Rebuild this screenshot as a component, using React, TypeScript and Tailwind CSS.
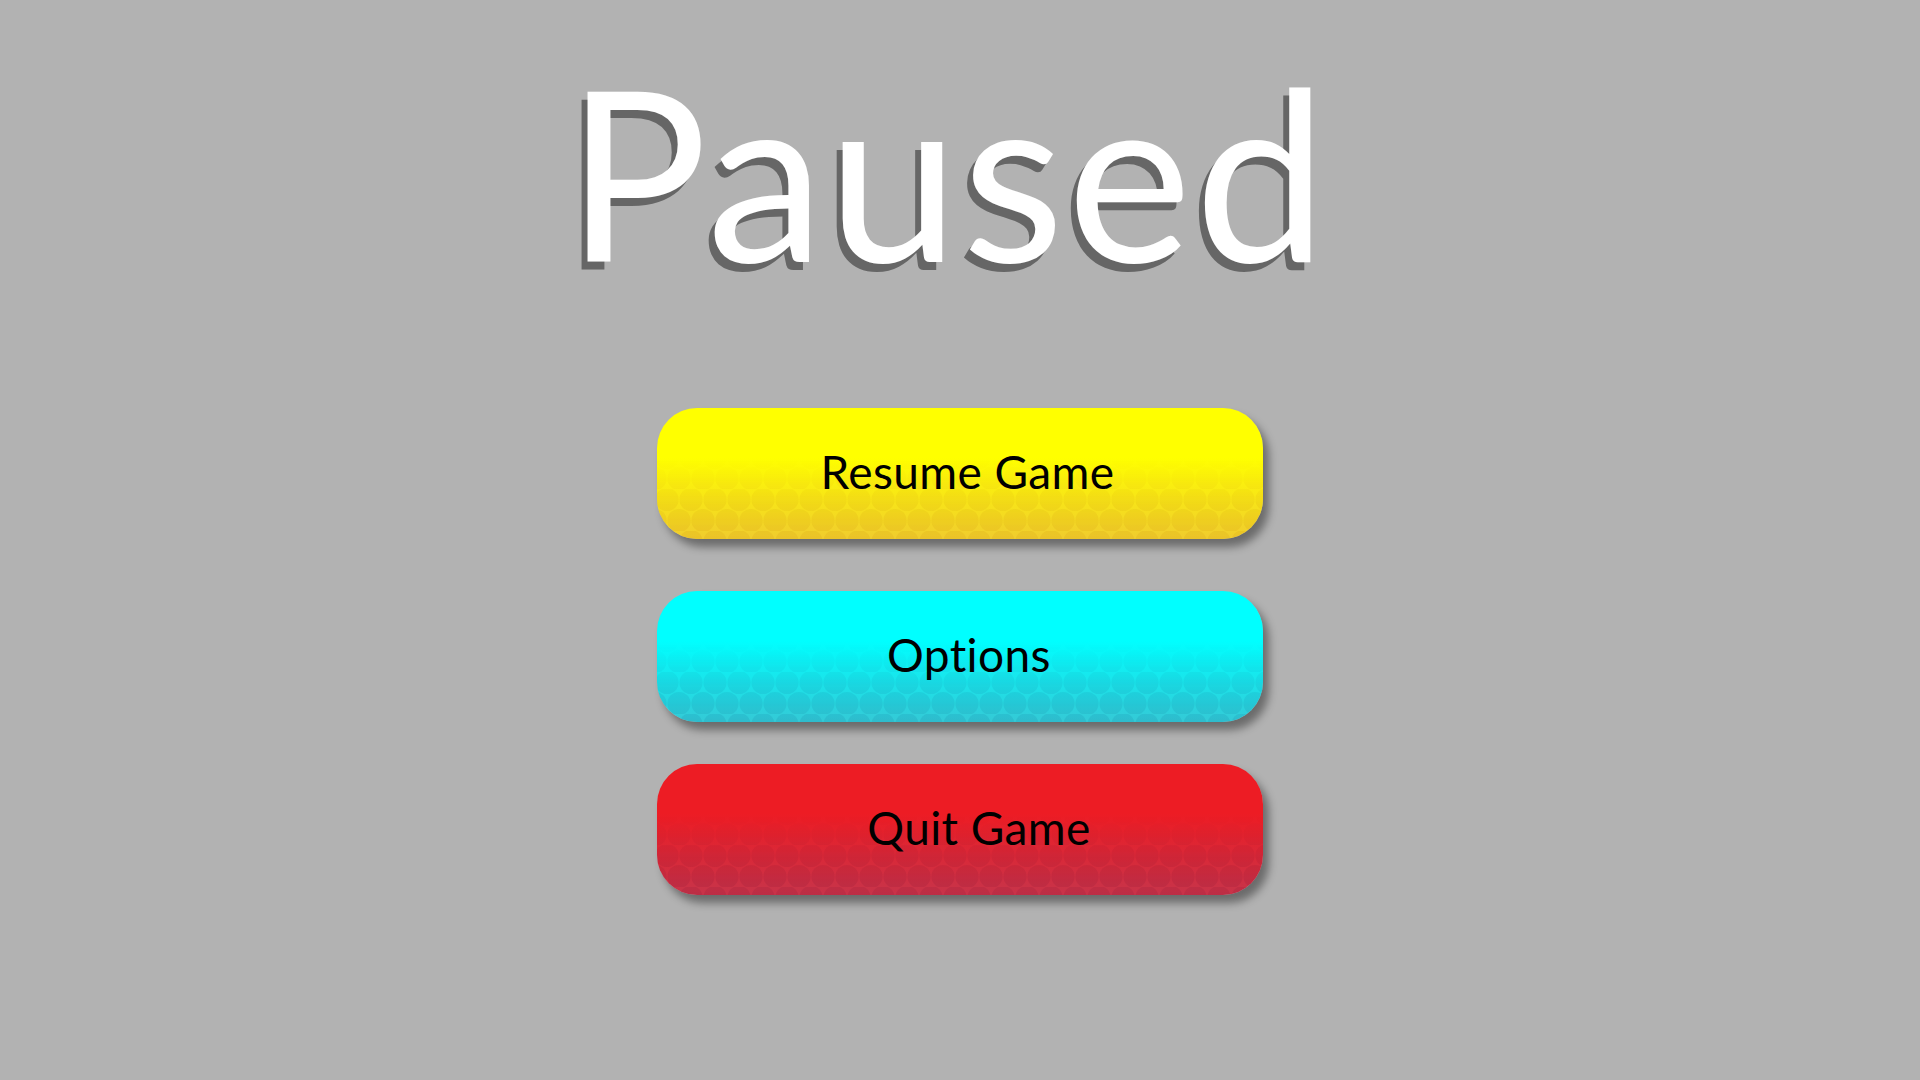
import React from 'react';

type MenuButtonProps = {
  label: string;
  top: string;
  bottom: string;
  dot: string;
  id: string;
  className?: string;
};

// lower half of each button carries a faint scale pattern that fades in
const ScalePattern = ({ id, dot }: { id: string; dot: string }) => (
  <svg className="pointer-events-none absolute inset-0 h-full w-full" aria-hidden="true">
    <defs>
      <pattern id={`p-${id}`} width="24" height="42" patternUnits="userSpaceOnUse" x="-2" y="-3">
        <circle cx="12" cy="10.5" r="11.6" fill={dot} />
        <circle cx="0" cy="31.5" r="11.6" fill={dot} />
        <circle cx="24" cy="31.5" r="11.6" fill={dot} />
      </pattern>
      <linearGradient id={`g-${id}`} x1="0" y1="0" x2="0" y2="1">
        <stop offset="0.4" stopColor="white" stopOpacity="0" />
        <stop offset="0.75" stopColor="white" stopOpacity="0.8" />
        <stop offset="1" stopColor="white" stopOpacity="1" />
      </linearGradient>
      <mask id={`m-${id}`}>
        <rect width="100%" height="100%" fill={`url(#g-${id})`} />
      </mask>
    </defs>
    <rect width="100%" height="100%" fill={`url(#p-${id})`} mask={`url(#m-${id})`} />
  </svg>
);

const MenuButton = ({ label, top, bottom, dot, id, className }: MenuButtonProps) => (
  <button
    className={`relative flex h-[131px] w-[606px] items-center justify-center overflow-hidden rounded-[40px] pb-[4px] shadow-[6px_8px_8px_rgba(0,0,0,0.4)] ${className ?? ''}`}
    style={{ backgroundImage: `linear-gradient(to bottom, ${top} 0%, ${top} 38%, ${bottom} 100%)` }}
  >
    <ScalePattern id={id} dot={dot} />
    <span className="relative text-[46px] leading-none tracking-[0.4px] text-black">{label}</span>
  </button>
);

export default function App() {
  return (
    <div className="flex min-h-screen w-full flex-col items-center bg-[#b2b2b2] font-['Lato',sans-serif] [font-variant-ligatures:none]">
      <h1 className="mt-[53px] mr-[24px] text-[236px] leading-none font-normal tracking-[3px] text-white [text-shadow:-6px_8px_0_#666666]">
        Paused
      </h1>

      <div className="mt-[119px] flex flex-col items-center">
        <MenuButton
          id="resume"
          label="Resume Game"
          top="#ffff00"
          bottom="#f0cc2e"
          dot="rgba(190,120,0,0.11)"
          className="pl-[15px]"
        />
        <MenuButton
          id="options"
          label="Options"
          top="#00ffff"
          bottom="#34c9d6"
          dot="rgba(0,60,110,0.09)"
          className="mt-[52px] pl-[18px]"
        />
        <MenuButton
          id="quit"
          label="Quit Game"
          top="#ed1c24"
          bottom="#c7344a"
          dot="rgba(90,0,40,0.1)"
          className="mt-[42px] pl-[38px]"
        />
      </div>
    </div>
  );
}
